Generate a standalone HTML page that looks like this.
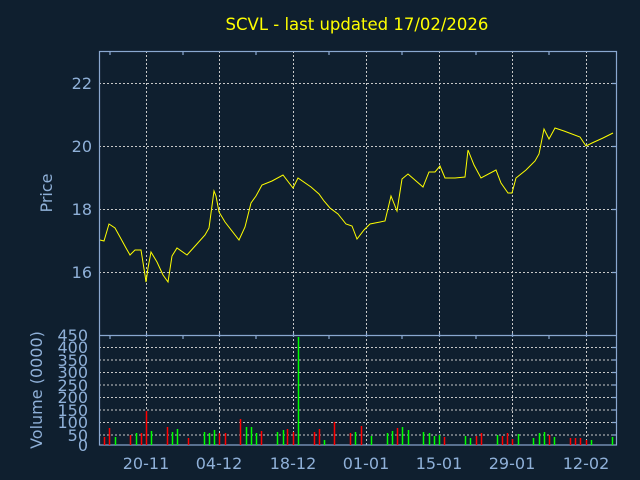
<!DOCTYPE html>
<html><head><meta charset="utf-8"><style>
html,body{margin:0;padding:0;background:#0f1f2f;}
svg{display:block;font-family:"DejaVu Sans","Liberation Sans",sans-serif;}
</style></head><body>
<svg width="640" height="480" xmlns="http://www.w3.org/2000/svg">
<rect width="640" height="480" fill="#0f1f2f"/>
<text x="357" y="30" fill="#ffff00" font-size="16.5" text-anchor="middle">SCVL - last updated 17/02/2026</text>
<g stroke="#c8c8c8" stroke-width="1" stroke-dasharray="2,2" fill="none">
<path d="M99 83.5H617M99 146.5H617M99 209.5H617M99 272.5H617"/>
<path d="M146.5 51V445M219.5 51V445M293.5 51V445M366.5 51V445M439.5 51V445M512.5 51V445M586.5 51V445"/>
<path d="M99 347.5H617M99 360H617M99 372.5H617M99 385H617M99 397.5H617M99 410H617M99 422.5H617M99 435H617"/>
</g>
<g stroke="#8aa8d0" stroke-width="1.2" fill="none">
<rect x="99.5" y="51.5" width="517" height="393.5"/>
<path d="M99 335.5H617"/>
<path d="M110 51v4M183 51v4M256 51v4M329 51v4M402 51v4M476 51v4M549 51v4"/>
<path d="M110 335v4M183 335v4M256 335v4M329 335v4M402 335v4M476 335v4M549 335v4"/>
<path d="M146.5 333v4M219.5 333v4M293.5 333v4M366.5 333v4M439.5 333v4M512.5 333v4M586.5 333v4"/>
<path d="M612 83.5h5M612 146.5h5M612 209.5h5M612 272.5h5M612 347.5h5M612 360h5M612 372.5h5M612 385h5M612 397.5h5M612 410h5M612 422.5h5M612 435h5"/>
</g>
<polyline fill="none" stroke="#ffff00" stroke-width="1" points="100,240 104,241 109,224 115,228 120,237 126,248 130,255 135,250 141,250 145,275 146,282 148,268 151,252 157,262 163,275 168,282 172,256 177,248 187,255 196,245 205,235 209,228 214,191 216,196 219,212 225,222 239,240 245,227 251,203 256,196 262,185 272,181 283,175 293,188 298,178 311,187 319,194 324,201 330,208 338,214 346,224 352,226 357,239 364,230 370,224 385,221 391,196 397,211 402,179 408,174 423,187 429,172 435,172 440,166 445,178 455,178 465,177 468,150 474,165 481,178 496,170 501,183 508,193 512,193 516,178 526,170 535,161 539,154 544,129 549,139 555,128 564,131 580,137 586,146 592,143 603,138 613,133"/>
<g stroke-width="1.5">
<g stroke="#ff0000">
<path d="M104.5 445V437M109.5 445V428M130.5 445V435M141.5 445V433M146.5 445V411M167.5 445V427M188.5 445V438M219.5 445V433M225.5 445V433M240.5 445V419M261.5 445V431M287.5 445V429M293.5 445V432M314.5 445V432M319.5 445V429M334.5 445V422M350.5 445V433M361.5 445V426M397.5 445V428M444.5 445V437M476.5 445V436M481.5 445V433M502.5 445V436M507.5 445V433M512.5 445V439M549.5 445V435M570.5 445V438M575.5 445V438M580.5 445V438M586.5 445V440"/>
</g>
<g stroke="#00ff00">
<path d="M115.5 445V437M136.5 445V433M151.5 445V431M172.5 445V432M177.5 445V429M204.5 445V432M209.5 445V433M214.5 445V430M246.5 445V427M251.5 445V427M256.5 445V433M277.5 445V432M283.5 445V430M298.5 445V337M324.5 445V440M355.5 445V432M371.5 445V436M387.5 445V433M392.5 445V431M402.5 445V427M408.5 445V430M423.5 445V432M429.5 445V433M434.5 445V436M439.5 445V435M465.5 445V436M470.5 445V438M497.5 445V435M518.5 445V434M533.5 445V438M539.5 445V433M544.5 445V432M554.5 445V437M591.5 445V440M612.5 445V437"/>
</g>
</g>
<g fill="#8fb0d8" font-size="16" text-anchor="end">
<text x="92" y="89">22</text>
<text x="92" y="152">20</text>
<text x="92" y="215">18</text>
<text x="92" y="278">16</text>
<text x="88" y="341">450</text>
<text x="88" y="353">400</text>
<text x="88" y="366">350</text>
<text x="88" y="378">300</text>
<text x="88" y="391">250</text>
<text x="88" y="403">200</text>
<text x="88" y="416">150</text>
<text x="88" y="428">100</text>
<text x="88" y="441">50</text>
<text x="88" y="451">0</text>
</g>
<g fill="#8fb0d8" font-size="16" text-anchor="middle">
<text x="146" y="469">20-11</text>
<text x="219" y="469">04-12</text>
<text x="293" y="469">18-12</text>
<text x="366" y="469">01-01</text>
<text x="439" y="469">15-01</text>
<text x="512" y="469">29-01</text>
<text x="586" y="469">12-02</text>
<text transform="translate(52,193) rotate(-90)">Price</text>
<text transform="translate(42,390) rotate(-90)">Volume (0000)</text>
</g>
</svg>
</body></html>
